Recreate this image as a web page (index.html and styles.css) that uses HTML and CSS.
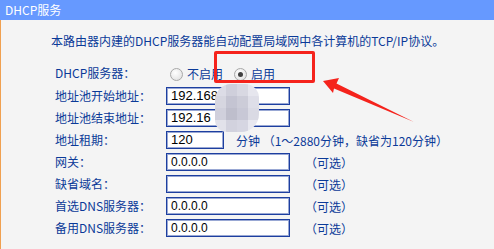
FILE: index.html
```html
<!DOCTYPE html>
<html>
	<head>
		<meta charset="utf-8" />
		<title>DHCP服务</title>
		<link rel="stylesheet" href="styles.css">
	</head>
	<body>
		<div id="title">DHCP服务</div>
		<div id="content">
			<p class="intro">本路由器内建的DHCP服务器能自动配置局域网中各计算机的TCP/IP协议。</p>
			<div class="form">
				<span class="label">DHCP服务器：</span>
				<span class="radios">
					<span class="radio"></span><span class="rtext">不启用</span>
					<span class="radio checked"></span><span class="rtext">启用</span>
				</span>

				<span class="label">地址池开始地址：</span>
				<span class="field"><span class="input ip">192.168.</span></span>

				<span class="label">地址池结束地址：</span>
				<span class="field"><span class="input ip">192.16</span></span>

				<span class="label">地址租期：</span>
				<span class="field"><span class="input short ip">120</span><span class="note lease">分钟 （1～2880分钟，缺省为120分钟）</span></span>

				<span class="label">网关：</span>
				<span class="field"><span class="input">0.0.0.0</span><span class="note">（可选）</span></span>

				<span class="label">缺省域名：</span>
				<span class="field"><span class="input"></span><span class="note">（可选）</span></span>

				<span class="label">首选DNS服务器：</span>
				<span class="field"><span class="input">0.0.0.0</span><span class="note">（可选）</span></span>

				<span class="label">备用DNS服务器：</span>
				<span class="field"><span class="input">0.0.0.0</span><span class="note">（可选）</span></span>
			</div>

			<!-- 标注 -->
			<div id="mark"></div>
			<svg id="arrow" width="100" height="52" viewBox="0 0 100 52">
				<polygon points="5,7 21,4 18.5,9.5 96,48 16,14.5 15,19" fill="#f5231c" />
			</svg>
			<div id="mosaic">
				<span style="background:#dcdce6"></span><span style="background:#cfcfdb"></span><span style="background:#d8d8e2"></span><span style="background:#e6e6ee"></span>
				<span style="background:#d6d6e0"></span><span style="background:#c4c4d2"></span><span style="background:#ccccd8"></span><span style="background:#dedee8"></span>
				<span style="background:#d0d0dc"></span><span style="background:#bebecc"></span><span style="background:#c8c8d6"></span><span style="background:#dadae4"></span>
				<span style="background:#e2e2ea"></span><span style="background:#d2d2de"></span><span style="background:#d6d6e2"></span><span style="background:#e8e8f0"></span>
			</div>
		</div>
	</body>
</html>
```

FILE: styles.css
```css
* {
	margin: 0;
	padding: 0;
}

body {
	width: 494px;
	height: 249px;
	overflow: hidden;
	background-color: #f4f4f4;
	font-family: "Noto Sans CJK SC", "Liberation Sans", sans-serif;
	font-size: 12px;
	color: #0b3a98;
}

#title {
	height: 20px;
	line-height: 20px;
	padding-left: 5px;
	background-color: #6699ff;
	color: #ffffff;
	font-size: 12px;
}

#content {
	position: relative;
	height: 229px;
	border-left: 1px solid #f0a050;
	box-sizing: border-box;
}

.intro {
	padding: 13px 0 0 50px;
	height: 29px;
	line-height: 16px;
	font-size: 12px;
}

.form {
	display: grid;
	grid-template-columns: 111px auto;
	grid-template-rows: 19px;
	grid-auto-rows: 18px;
	row-gap: 4px;
	padding: 2px 0 0 54px;
}

.label {
	line-height: 18px;
}

.radios {
	display: flex;
	align-items: center;
	padding-left: 4px;
}

.radio {
	width: 11px;
	height: 11px;
	border: 1px solid #a8a8a8;
	border-radius: 50%;
	background: radial-gradient(circle at 40% 35%, #ffffff, #dcdcdc);
	margin-right: 4px;
	position: relative;
	top: 1px;
}

.radio.checked::after {
	content: "";
	position: absolute;
	left: 3px;
	top: 3px;
	width: 5px;
	height: 5px;
	border-radius: 50%;
	background-color: #404040;
}

.rtext {
	margin-right: 11px;
	line-height: 18px;
}

.field {
	display: flex;
	align-items: center;
}

.input {
	width: 124px;
	height: 18px;
	box-sizing: border-box;
	border: 1px solid #1d3fa0;
	box-shadow: inset 0 0 0 1px rgba(29, 63, 160, 0.45);
	background-color: #ffffff;
	color: #000000;
	font-family: "Liberation Sans", sans-serif;
	font-size: 12px;
	line-height: 16px;
	padding-left: 4px;
}

.input.ip {
	font-size: 13px;
}

.input.short {
	width: 58px;
}

.note {
	margin-left: 15px;
}

.note.lease {
	margin-left: 12px;
}

#mark {
	position: absolute;
	left: 213px;
	top: 31px;
	width: 95px;
	height: 26px;
	border: 3px solid #f5231c;
	border-radius: 2px;
}

#arrow {
	position: absolute;
	left: 317px;
	top: 54px;
}

#mosaic {
	position: absolute;
	left: 214px;
	top: 64px;
	width: 44px;
	height: 48px;
	display: grid;
	grid-template-columns: repeat(4, 11px);
	grid-template-rows: repeat(4, 12px);
	border-radius: 16px 14px 18px 12px;
	overflow: hidden;
	filter: blur(0.6px);
}
```
